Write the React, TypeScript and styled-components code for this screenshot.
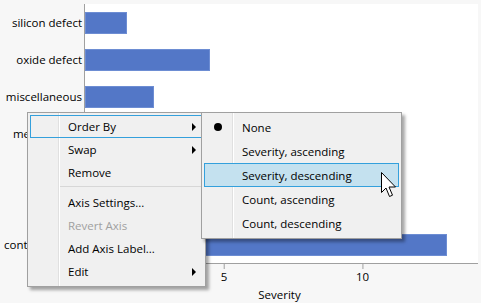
import React from "react";
import styled, { createGlobalStyle } from "styled-components";

const Global = createGlobalStyle`
  html, body { margin: 0; padding: 0; }
  body { background: #f7f7f7; }
`;

const UNIT = 27.7;

const categories = [
  { label: "silicon defect", value: 1.5 },
  { label: "oxide defect", value: 4.5 },
  { label: "miscellaneous", value: 2.5 },
  { label: "metallization", value: 3 },
  { label: "corrosion", value: 5 },
  { label: "doping", value: 8 },
  { label: "contamination", value: 13.07 },
];

const ticks = [5, 10];

const Page = styled.div`
  position: relative;
  width: 481px;
  height: 303px;
  overflow: hidden;
  background: #f7f7f7;
  font-family: "Open Sans", "Noto Sans", sans-serif;
  font-size: 11.5px;
  color: #000;
`;

const Chart = styled.div`
  display: grid;
  grid-template-columns: 84px 395px;
  grid-template-rows: 260px 39px;
  padding-top: 4px;
`;

const LabelColumn = styled.div`
  display: flex;
  flex-direction: column;
  align-items: flex-end;
  gap: 15px;
  padding: 8px 2px 0 0;
`;

const CatLabel = styled.div`
  height: 22px;
  line-height: 21px;
  white-space: nowrap;
`;

const Plot = styled.div`
  display: flex;
  flex-direction: column;
  gap: 15px;
  padding-top: 8px;
  background: #fff;
  border-left: 1px solid #a0a0a0;
  border-bottom: 1px solid #a0a0a0;
  margin-right: 1px;
`;

const Bar = styled.div`
  height: 22px;
  box-sizing: border-box;
  background: #5377c7;
  border: 1px solid #6d8dd3;
`;

const Axis = styled.div`
  grid-column: 2;
  display: flex;
  flex-direction: column;
`;

const TickRow = styled.div`
  position: relative;
  height: 23px;
`;

const Tick = styled.div`
  position: absolute;
  top: 0;
  display: flex;
  flex-direction: column;
  align-items: center;
  transform: translateX(-50%);
`;

const TickMark = styled.div`
  width: 1px;
  height: 5px;
  background: #a0a0a0;
`;

const TickLabel = styled.div`
  line-height: 15px;
`;

const AxisTitle = styled.div`
  text-align: center;
  line-height: 16px;
  padding-right: 4px;
`;

const Menu = styled.div<{ $left: number; $top: number; $width: number }>`
  position: absolute;
  left: ${(p) => p.$left}px;
  top: ${(p) => p.$top}px;
  width: ${(p) => p.$width}px;
  box-sizing: border-box;
  padding: 2px 2px 3px;
  border: 1px solid #a0a0a0;
  background: linear-gradient(
    to right,
    #f0f0f0 0 30px,
    #e0e0e0 30px 31px,
    #ffffff 31px 32px,
    #f0f0f0 32px
  );
  box-shadow: 3px 3px 3px rgba(0, 0, 0, 0.35);
  color: #000;
`;

const Item = styled.div<{ $h: number; $state?: "focus" | "hover"; $disabled?: boolean }>`
  position: relative;
  display: flex;
  align-items: center;
  height: ${(p) => p.$h}px;
  box-sizing: border-box;
  padding-left: 37px;
  white-space: nowrap;
  color: ${(p) => (p.$disabled ? "#a0a0a0" : "#000")};
  border: 1px solid ${(p) => (p.$state ? "#34a0dc" : "transparent")};
  background: ${(p) => (p.$state === "hover" ? "#c4e1ef" : "transparent")};
`;

const Arrow = styled.span`
  position: absolute;
  right: 6px;
  top: 50%;
  margin-top: -4px;
  width: 0;
  height: 0;
  border-top: 4px solid transparent;
  border-bottom: 4px solid transparent;
  border-left: 4px solid #000;
`;

const Bullet = styled.span`
  position: absolute;
  left: 9px;
  top: 50%;
  margin-top: -4px;
  width: 8px;
  height: 8px;
  border-radius: 50%;
  background: #000;
`;

const Separator = styled.div`
  height: 7px;
  display: flex;
  align-items: center;
  padding-left: 30px;
  &::after {
    content: "";
    flex: 1;
    height: 1px;
    margin-top: -2px;
    background: #d7d7d7;
  }
`;

const Cursor = styled.svg`
  position: absolute;
  left: 381px;
  top: 172px;
`;

export default function App() {
  return (
    <Page>
      <Global />
      <Chart>
        <LabelColumn>
          {categories.map((c) => (
            <CatLabel key={c.label}>{c.label}</CatLabel>
          ))}
        </LabelColumn>
        <Plot>
          {categories.map((c) => (
            <Bar key={c.label} style={{ width: c.value * UNIT }} />
          ))}
        </Plot>
        <Axis>
          <TickRow>
            {ticks.map((t) => (
              <Tick key={t} style={{ left: 1.5 + t * UNIT }}>
                <TickMark />
                <TickLabel>{t}</TickLabel>
              </Tick>
            ))}
          </TickRow>
          <AxisTitle>Severity</AxisTitle>
        </Axis>
      </Chart>

      <Menu $left={27} $top={112} $width={179}>
        <Item $h={23} $state="focus">
          Order By
          <Arrow />
        </Item>
        <Item $h={23}>
          Swap
          <Arrow />
        </Item>
        <Item $h={23}>Remove</Item>
        <Separator />
        <Item $h={23}>Axis Settings...</Item>
        <Item $h={23} $disabled>
          Revert Axis
        </Item>
        <Item $h={23}>Add Axis Label...</Item>
        <Item $h={23}>
          Edit
          <Arrow />
        </Item>
      </Menu>

      <Menu $left={201} $top={112} $width={201}>
        <Item $h={24}>
          <Bullet />
          None
        </Item>
        <Item $h={24}>Severity, ascending</Item>
        <Item $h={24} $state="hover">
          Severity, descending
        </Item>
        <Item $h={24}>Count, ascending</Item>
        <Item $h={24}>Count, descending</Item>
      </Menu>

      <Cursor width="16" height="27" viewBox="0 0 16 27">
        <path
          d="M0.5 0.5 L0.5 20.5 L5 16 L8.5 24.5 L11.5 23.2 L8 15 L14.5 15 Z"
          fill="#fff"
          stroke="#000"
          strokeWidth="1"
          strokeLinejoin="miter"
        />
      </Cursor>
    </Page>
  );
}
